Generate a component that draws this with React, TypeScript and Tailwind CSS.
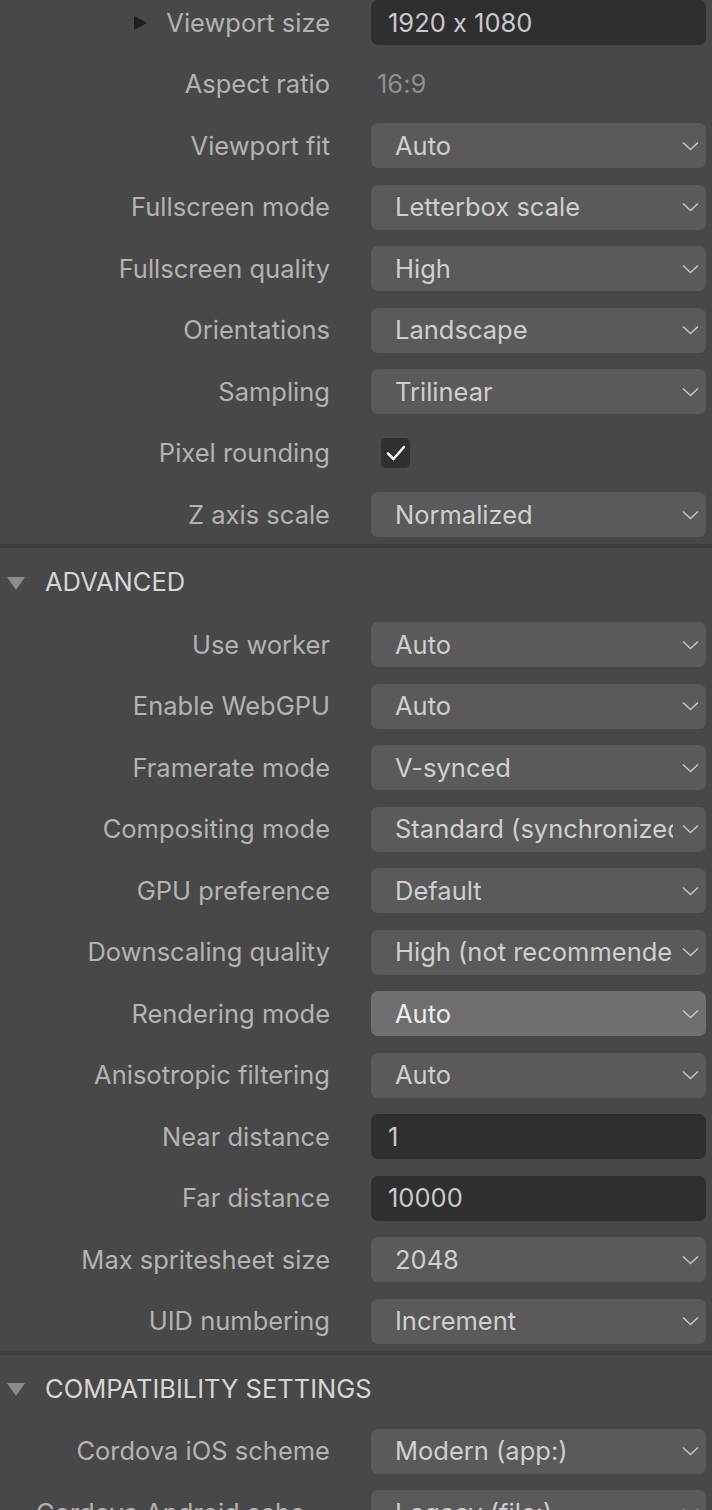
import React from "react";

type Row =
  | { label: string; kind: "select"; value: string; active?: boolean }
  | { label: string; kind: "input"; value: string }
  | { label: string; kind: "text"; value: string }
  | { label: string; kind: "check" };

const topRows: Row[] = [
  { label: "Viewport size", kind: "input", value: "1920 x 1080" },
  { label: "Aspect ratio", kind: "text", value: "16:9" },
  { label: "Viewport fit", kind: "select", value: "Auto" },
  { label: "Fullscreen mode", kind: "select", value: "Letterbox scale" },
  { label: "Fullscreen quality", kind: "select", value: "High" },
  { label: "Orientations", kind: "select", value: "Landscape" },
  { label: "Sampling", kind: "select", value: "Trilinear" },
  { label: "Pixel rounding", kind: "check" },
  { label: "Z axis scale", kind: "select", value: "Normalized" },
];

const advancedRows: Row[] = [
  { label: "Use worker", kind: "select", value: "Auto" },
  { label: "Enable WebGPU", kind: "select", value: "Auto" },
  { label: "Framerate mode", kind: "select", value: "V-synced" },
  { label: "Compositing mode", kind: "select", value: "Standard (synchronized)" },
  { label: "GPU preference", kind: "select", value: "Default" },
  { label: "Downscaling quality", kind: "select", value: "High (not recommended)" },
  { label: "Rendering mode", kind: "select", value: "Auto", active: true },
  { label: "Anisotropic filtering", kind: "select", value: "Auto" },
  { label: "Near distance", kind: "input", value: "1" },
  { label: "Far distance", kind: "input", value: "10000" },
  { label: "Max spritesheet size", kind: "select", value: "2048" },
  { label: "UID numbering", kind: "select", value: "Increment" },
];

const compatRows: Row[] = [
  { label: "Cordova iOS scheme", kind: "select", value: "Modern (app:)" },
  { label: "Cordova Android scheme", kind: "select", value: "Legacy (file:)" },
];

function Chevron() {
  return (
    <svg width="17" height="10" viewBox="0 0 17 10" className="shrink-0">
      <polyline points="1,1.5 8.5,8.5 16,1.5" fill="none" stroke="#c4c4c4" strokeWidth="1.6" />
    </svg>
  );
}

function Control({ row }: { row: Row }) {
  if (row.kind === "select") {
    return (
      <div
        className={`flex h-[45px] w-[335px] items-center rounded-[7px] pl-[24px] pr-[7px] ${
          row.active ? "bg-[#6f6f6f] text-[#ededed]" : "bg-[#5a5a5a] text-[#cfcfcf]"
        }`}
      >
        <span className="mr-[9px] min-w-0 flex-1 overflow-hidden whitespace-nowrap leading-[1.4]">{row.value}</span>
        <Chevron />
      </div>
    );
  }
  if (row.kind === "input") {
    return (
      <div className="flex h-[45px] w-[335px] items-center rounded-[7px] bg-[#2f2f2f] pl-[17px] text-[#c9c9c9]">
        {row.value}
      </div>
    );
  }
  if (row.kind === "text") {
    return <div className="flex h-[45px] items-center pl-[6px] text-[#8e8e8e]">{row.value}</div>;
  }
  return (
    <div className="flex h-[45px] items-center pl-[10px]">
      <div className="flex h-[30px] w-[29px] items-center justify-center rounded-[5px] bg-[#2f2f2f]">
        <svg width="20" height="16" viewBox="0 0 20 16">
          <polyline points="2,8.5 7.5,14 18,2" fill="none" stroke="#f2f2f2" strokeWidth="2.6" strokeLinecap="round" strokeLinejoin="round" />
        </svg>
      </div>
    </div>
  );
}

function SettingRow({ row, expander }: { row: Row; expander?: boolean }) {
  return (
    <div className="flex h-[45px] items-center">
      <div className="relative w-[330px] pl-[36px] text-right text-[#b3b3b3]">
        {expander && (
          <svg width="13" height="14" viewBox="0 0 13 14" className="absolute left-[134px] top-1/2 -translate-y-1/2">
            <polygon points="0,0 13,7 0,14" fill="#1f1f1f" />
          </svg>
        )}
        <div className="truncate leading-[1.4]">{row.label}</div>
      </div>
      <div className="ml-[41px]">
        <Control row={row} />
      </div>
    </div>
  );
}

function SectionHeader({ title }: { title: string }) {
  return (
    <>
      <div className="mt-[7px] h-[4px] bg-[#3e3e3e]" />
      <div className="flex h-[68px] items-center">
        <svg width="18" height="13" viewBox="0 0 18 13" className="ml-[7px] mt-[2px]">
          <polygon points="0,0 18,0 9,13" fill="#8c8c8c" />
        </svg>
        <span className="ml-[20px] text-[#d6d6d6]">{title}</span>
      </div>
    </>
  );
}

export default function App() {
  return (
    <div
      className="h-[1510px] w-[712px] overflow-hidden bg-[#484848] text-[25.5px] leading-none"
      style={{ fontFamily: "Inter, 'Noto Sans', sans-serif", fontFeatureSettings: '"calt" 0' }}
    >
      <div className="flex flex-col gap-[16.5px]">
        {topRows.map((r, i) => (
          <SettingRow key={r.label} row={r} expander={i === 0} />
        ))}
      </div>

      <SectionHeader title="ADVANCED" />
      <div className="flex flex-col gap-[16.5px] pt-[6px]">
        {advancedRows.map((r) => (
          <SettingRow key={r.label} row={r} />
        ))}
      </div>

      <SectionHeader title="COMPATIBILITY SETTINGS" />
      <div className="flex flex-col gap-[16.5px] pt-[6px]">
        {compatRows.map((r) => (
          <SettingRow key={r.label} row={r} />
        ))}
      </div>
    </div>
  );
}
